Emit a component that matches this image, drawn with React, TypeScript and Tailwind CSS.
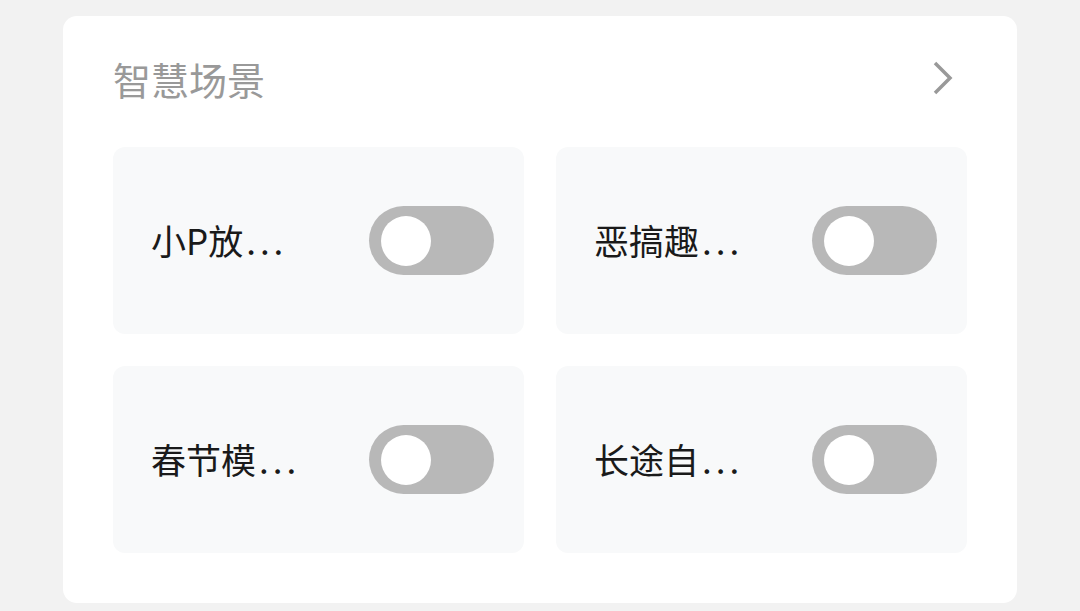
import React from "react";

const scenes = ["小P放", "恶搞趣", "春节模", "长途自"];

function Toggle() {
  return (
    <div className="flex h-[69px] w-[125px] shrink-0 items-center rounded-full bg-[#b8b8b8] px-3">
      <div className="h-[50px] w-[50px] rounded-full bg-white" />
    </div>
  );
}

export default function App() {
  return (
    <div
      className="h-[611px] w-[1080px] bg-[#f2f2f2] pl-[63px] pt-4"
      style={{ fontFamily: '"Noto Sans CJK SC", "Noto Sans", sans-serif' }}
    >
      <div className="w-[954px] rounded-[14px] bg-white px-[50px] pb-[50px] pt-[36px]">
        {/* Header */}
        <div className="flex items-center justify-between">
          <div className="text-[38px] leading-[54px] text-[#999999]">智慧场景</div>
          <svg width="24" height="36" viewBox="0 0 24 36" className="mr-[11px] -mt-[3px]">
            <path d="M3 3 L18 18 L3 33" fill="none" stroke="#999999" strokeWidth="3.5" />
          </svg>
        </div>

        {/* Scene grid */}
        <div className="mt-[41px] grid grid-cols-2 gap-x-[32px] gap-y-[32px]">
          {scenes.map((s) => (
            <div
              key={s}
              className="flex h-[187px] items-center justify-between rounded-[12px] bg-[#f8f9fa] pl-[38px] pr-[30px]"
            >
              <span className="text-[35px] text-[#1a1a1a]">
                {s}
                <span className="ml-[3px] tracking-[4px]">...</span>
              </span>
              <Toggle />
            </div>
          ))}
        </div>
      </div>
    </div>
  );
}
